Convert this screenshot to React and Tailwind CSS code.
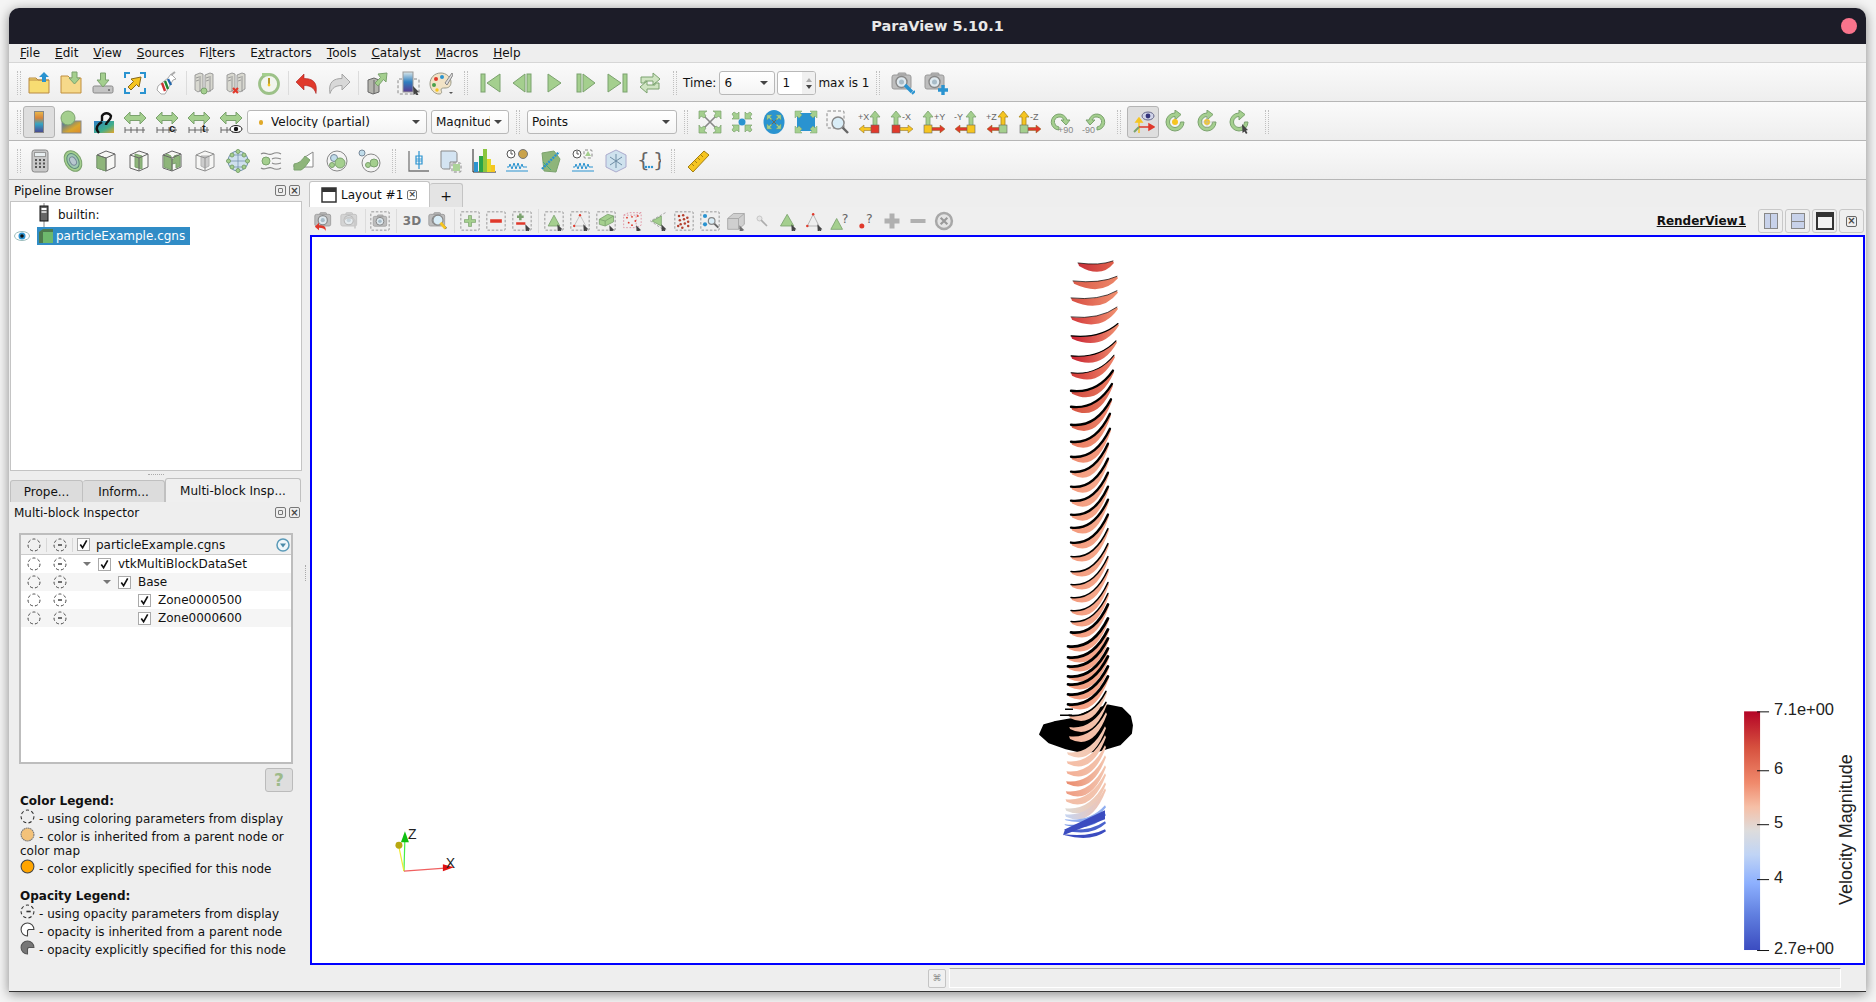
import React from "react";

// colours used by the paraview icon theme
const GF = "#a4cf8e";
const GS = "#7ba26e";
const YF = "#f6c520";
const BF = "#2a93d0";
const RF = "#e0392b";
const GR = "#bdbdbd";

const dash = (x, y, w, h) => <rect x={x} y={y} width={w} height={h} rx="1" fill="none" stroke="#888" strokeWidth="1" strokeDasharray="3 2" />;
const lens = (x, y, r = 5) => (
  <g>
    <line x1={x + r * 0.7} y1={y + r * 0.7} x2={x + r + 4} y2={y + r + 4} stroke="#666" strokeWidth="2.4" />
    <circle cx={x} cy={y} r={r} fill="#d9edf7" stroke="#888" strokeWidth="1.4" />
  </g>
);
const pointer = (x, y) => <path d={`M${x} ${y}l6 6-2 .5 1.5 2.5-1.5 1-1.5-2.5-2 1.5z`} fill="#444" />;
const camera = (
  <g>
    <rect x="7" y="2" width="8" height="4" rx="1" fill="#bbb" stroke="#999" />
    <rect x="1" y="4" width="19" height="14" rx="2" fill={GR} stroke="#999" />
    <circle cx="10.500" cy="11" r="5.500" fill="#dfe9ef" stroke="#888" strokeWidth="1.4" />
    <circle cx="10.500" cy="11" r="2.500" fill="#a8bcc8" />
  </g>
);
const server = (x, o = 1) => (
  <g opacity={o}>
    <path d={`M${x} 4l5-2 3 1v15l-5 3-3-2z`} fill="#d8d8d0" stroke="#8c8c8c" strokeWidth=".8" />
    <path d={`M${x + 5} 5v16M${x + 1} 7l3-1M${x + 1} 10l3-1`} stroke="#8c8c8c" strokeWidth=".8" fill="none" />
  </g>
);
const vArrow = (x, y, h, c) => (
  <path d={`M${x - 2} ${y + h + 6}h4v${-h}h3l-5-6-5 6h3z`} fill={c} stroke={c === GF ? GS : "#a8861a"} strokeWidth=".8" />
);
const axis = (label, hc, sq, left, vc, sx) => (
  <g>
    <path d={left ? "M1 19l5-4v2.500h11v3H6v2.500z" : "M23 19l-5-4v2.500H7v3h11v2.500z"} fill={hc} stroke="#8a6a20" strokeWidth=".5" />
    {vArrow(sx, 1, 10, vc)}
    <rect x={sx - 4} y="15" width="8" height="8" fill={sq} stroke="#666" strokeWidth=".6" />
    <text x={left ? 0 : 12} y="10" fontSize="9" fill="#666" fontFamily="Liberation Sans">{label}</text>
  </g>
);
const rescale = (tag) => (
  <g>
    <path d="M1 8l6-6v3.500h10V2l6 6-6 6v-3.500H7V14z" fill={GF} stroke={GS} />
    <path d="M2 20h20M2 17v6M8 17v6M14 17v6M20 17v6" stroke="#666" fill="none" />
    {tag}
  </g>
);
const rot = (inner, extra) => (
  <g>
    <path d="M12 3a9 9 0 1 0 9 9h-3.500a5.500 5.500 0 1 1-5.500-5.500V10l6-5.500L12 0z" fill={GF} stroke={GS} />
    {inner}
    {extra}
  </g>
);
const box3 = (face, op = 1) => (
  <g opacity={op}>
    <path d="M3 6l9-4 9 3v13l-9 4-9-3z" fill="#f7f7f5" stroke="#666" />
    {face}
    <path d="M3 6l9 3 9-4M12 9v13" fill="none" stroke="#666" />
  </g>
);
const blob = (cx, cy, r) => <circle cx={cx} cy={cy} r={r} fill={GF} stroke={GS} />;

const ICONS = {
  open: <g><path d="M2 7h7l2 2h11v13H2z" fill="#f7dc72" stroke="#b88a45" /><path d="M2 9h20" stroke="#b88a45" /><path d="M17 1l5 5h-3v5h-4V6h-3z" fill={BF} /></g>,
  loadState: <g><path d="M2 5h7l2 2h11v15H2z" fill="#f6d98a" stroke="#c08f3f" /><path d="M13 1h5v6h3l-5.500 6L10 7h3z" fill={GF} stroke={GS} /></g>,
  save: <g><rect x="2" y="15" width="20" height="7" rx="1.500" fill="#c4c4c4" stroke="#888" /><circle cx="18" cy="19" r="1" fill="#666" /><path d="M9.500 2h5v7H18l-6 7-6-7h3.500z" fill={GF} stroke={GS} /></g>,
  apply: <g><path d="M2 7V2h5M17 2h5v5M22 17v5h-5M7 22H2v-5" fill="none" stroke={BF} strokeWidth="2" /><path d="M18 6l-2 10-2.500-2.500L8 19l-3-3 5.500-5.500L8 8z" fill={YF} stroke="#8a6a1a" /></g>,
  flask: <g><path d="M16 3l5 5-3 1-8 14H6l-4-4 1-4 10-8z" fill="#fff" stroke="#aaa" /><path d="M7 12l3 8" stroke="#c33" strokeWidth="2.400" /><path d="M10 10l3 8" stroke="#283" strokeWidth="2.400" /><path d="M13 8l3 6" stroke="#26a" strokeWidth="2.400" /><path d="M20 1l-4 3" stroke="#aaa" strokeWidth="2" /></g>,
  connect: <g>{server(2)}{server(12)}<circle cx="11" cy="20" r="3" fill={GF} stroke={GS} /></g>,
  disconnect: <g>{server(2)}{server(12)}<path d="M8 17l5 5M13 17l-5 5" stroke={RF} strokeWidth="2.200" /></g>,
  timer: <g><circle cx="12" cy="13" r="9.500" fill="#f2f5ee" stroke="#9cc188" strokeWidth="2.800" /><path d="M12 7v6" stroke="#b79b2c" strokeWidth="2" /><circle cx="12" cy="14" r="1.400" fill={YF} /><path d="M5 2h8v3H5z" fill={GF} /></g>,
  undo: <g><path d="M1 11l8-8v4.500c8 0 14 3 12 15-2-6-6-8-12-8V19z" fill={RF} stroke="#a22" strokeWidth=".6" /></g>,
  redo: <g><path d="M23 11l-8-8v4.500C7 7.500 1 10.500 3 22.500c2-6 6-8 12-8V19z" fill="#d8d8d8" stroke="#a4a4a4" /></g>,
  boxArrow: <g><path d="M3 9l6-2 5 2v12l-6 2-5-2z" fill="#b4b4ae" stroke="#666" /><path d="M9 9v14" stroke="#666" /><path d="M22 2l-1 9-2.500-2.500L13 15l-3-3 5.500-5.500L13 3z" fill={GF} stroke={GS} /></g>,
  colorBox: <g>{dash(1, 8, 21, 15)}<defs><linearGradient id="cb1" x1="0" y1="0" x2="0" y2="1"><stop offset="0" stopColor="#dbe7e9" /><stop offset=".5" stopColor="#2f7fc0" /><stop offset="1" stopColor="#5a3a90" /></linearGradient></defs><rect x="6" y="1" width="10" height="20" fill="url(#cb1)" stroke="#999" />{pointer(16, 15)}</g>,
  palette: <g><path d="M12 2C5 2 1 7 1 13s5 10 9 10c3 0 3-2 2-4 0-2 2-2 4-2 4 0 6-2 6-6 0-5-5-9-10-9z" fill="#f1e3c6" stroke="#998" /><circle cx="7" cy="8" r="2" fill={RF} /><circle cx="13" cy="6" r="2" fill={BF} /><circle cx="5" cy="14" r="2" fill="#4aa04a" /><circle cx="8" cy="19" r="1.700" fill={YF} /><path d="M23 2l-7 10 2 2 6-10z" fill="#ddd" stroke="#888" /><path d="M20 21h4l-2 2z" fill="#555" /></g>,
  first: <g><rect x="3" y="3" width="4" height="18" fill={GF} stroke={GS} /><path d="M22 3v18L9 12z" fill={GF} stroke={GS} /></g>,
  back: <g><rect x="17" y="3" width="4" height="18" fill={GF} stroke={GS} /><path d="M15 3v18L3 12z" fill={GF} stroke={GS} /></g>,
  play: <path d="M6 3v18l13-9z" fill={GF} stroke={GS} />,
  next: <g><rect x="3" y="3" width="4" height="18" fill={GF} stroke={GS} /><path d="M9 3v18l12-9z" fill={GF} stroke={GS} /></g>,
  last: <g><rect x="17" y="3" width="4" height="18" fill={GF} stroke={GS} /><path d="M2 3v18l13-9z" fill={GF} stroke={GS} /></g>,
  loop: <g><path d="M3 12V6h12V2l7 6-7 6v-4H7v2z" fill="#cfe4c2" stroke={GS} /><path d="M21 12v6H9v4l-7-6 7-6v4h8v-2z" fill="#cfe4c2" stroke={GS} /></g>,
  camWrench: <g>{camera}<path d="M14 14l7 7" stroke={BF} strokeWidth="3.400" /><path d="M21 23l3-3" stroke={BF} strokeWidth="2" /></g>,
  camPlus: <g>{camera}<path d="M19 14v10M14 19h10" stroke={BF} strokeWidth="3.400" /></g>,
  bar: <g><rect x="7" y="1" width="10" height="22" fill="#888" /><defs><linearGradient id="cb2" x1="0" y1="0" x2="0" y2="1"><stop offset="0" stopColor="#e8b64a" /><stop offset=".3" stopColor="#d7843a" /><stop offset=".6" stopColor="#33a5c4" /><stop offset="1" stopColor="#4a4a92" /></linearGradient></defs><rect x="8" y="2" width="8" height="20" fill="url(#cb2)" /></g>,
  sphereGrad: <g><defs><linearGradient id="cb3" x1="0" y1="0" x2="1" y2="1"><stop offset="0" stopColor="#2f6fb8" /><stop offset=".6" stopColor="#d9a62f" /><stop offset="1" stopColor="#e08a2a" /></linearGradient></defs><rect x="3" y="11" width="19" height="12" fill="url(#cb3)" stroke="#888" /><circle cx="9" cy="8" r="7" fill={GF} stroke={GS} /></g>,
  linkGrad: <g><defs><linearGradient id="cb4" x1="0" y1="0" x2="1" y2="1"><stop offset="0" stopColor="#2f7fc8" /><stop offset=".6" stopColor="#3fae8c" /><stop offset="1" stopColor="#e5a52a" /></linearGradient></defs><rect x="3" y="11" width="20" height="12" fill="url(#cb4)" /><path d="M11 11V6a5 5 0 0 1 9 0c0 5-5 5-5 9M8 23c-3-3-3-6 0-9l3-2" fill="none" stroke="#111" strokeWidth="2.400" /></g>,
  rs: rescale(),
  rsC: rescale(<text x="14" y="22" fontSize="11" fontWeight="bold" fill="#222" fontFamily="Liberation Sans">c</text>),
  rsT: rescale(<text x="15" y="22" fontSize="11" fontWeight="bold" fill="#222" fontFamily="Liberation Sans">t</text>),
  rsE: rescale(<g><ellipse cx="17" cy="19" rx="6" ry="3.500" fill="#fff" stroke="#222" /><circle cx="17" cy="19" r="2.200" fill="#111" /></g>),
  cross: <g><path d="M5 5l14 14M19 5L5 19" stroke="#888" strokeWidth="1.600" /><path d="M1 1h8l-3 2 2 3-2 2-3-2-2 3zM23 1h-8l3 2-2 3 2 2 3-2 2 3zM1 23h8l-3-2 2-3-2-2-3 2-2-3zM23 23h-8l3-2-2-3 2-2 3 2 2-3z" fill={GF} stroke={GS} strokeWidth=".7" /></g>,
  converge: <g><circle cx="12" cy="12" r="3.500" fill={BF} /><path d="M9 9H2l2-2-2-3 2-2 3 2 2-2zM15 9h7l-2-2 2-3-2-2-3 2-2-2zM9 15H2l2 2-2 3 2 2 3-2 2 2zM15 15h7l-2 2 2 3-2 2-3-2-2 2z" fill={GF} stroke={GS} strokeWidth=".7" /></g>,
  circleFit: <g><ellipse cx="12" cy="12" rx="10.500" ry="12" fill={BF} /><path d="M7 7l10 10M17 7L7 17" stroke="#6a6a5a" /><path d="M5 5h5L8 7l2 2-1 1-2-2-2 2zM19 5h-5l2 2-2 2 1 1 2-2 2 2zM5 19h5l-2-2 2-2-1-1-2 2-2-2zM19 19h-5l2-2-2-2 1-1 2 2 2-2z" fill={GF} stroke={GS} strokeWidth=".5" /></g>,
  squareFit: <g><rect x="3" y="3" width="18" height="18" rx="2" fill={BF} /><path d="M1 1h7L6 3l2 2-3 3-2-2-2 2zM23 1h-7l2 2-2 2 3 3 2-2 2 2zM1 23h7l-2-2 2-2-3-3-2 2-2-2zM23 23h-7l2-2-2-2 3-3 2 2 2-2z" fill={GF} stroke={GS} strokeWidth=".5" /></g>,
  zoomBox: <g>{dash(1, 1, 17, 17)}{lens(12, 13, 6)}</g>,
  xp: axis("+X", YF, RF, true, GF, 17),
  xm: axis("-X", YF, RF, false, GF, 6),
  yp: axis("+Y", RF, YF, false, GF, 6),
  ym: axis("-Y", RF, YF, true, GF, 17),
  zp: axis("+Z", RF, GF, true, YF, 17),
  zm: axis("-Z", RF, GF, false, YF, 6),
  rotP: <g><path d="M9 20a8 8 0 1 1 8-10h3l-4 5-5-5h3a5 5 0 1 0-5 7z" fill={GF} stroke={GS} /><text x="8" y="23" fontSize="9" fill="#888" fontFamily="Liberation Sans">+90</text></g>,
  rotM: <g><path d="M15 20a8 8 0 1 0-8-10H4l4 5 5-5h-3a5 5 0 1 1 5 7z" fill={GF} stroke={GS} /><text x="0" y="23" fontSize="9" fill="#888" fontFamily="Liberation Sans">-90</text></g>,
  axesEye: <g><path d="M8 23V8M8 8l-3 4h6z" stroke={YF} fill={YF} strokeWidth="1.500" /><path d="M8 17h11M23 17l-5-3v6z" stroke={RF} fill={RF} strokeWidth="1.500" /><path d="M8 17l-5 5" stroke={GS} strokeWidth="2" /><ellipse cx="17" cy="6" rx="6" ry="4" fill="#cfd3e8" stroke="#668" /><circle cx="17" cy="6" r="2.400" fill="#33337a" /></g>,
  rotCenter: rot(<circle cx="12" cy="12" r="3" fill={YF} />),
  rotCross: rot(<g><circle cx="12" cy="12" r="3" fill={YF} /><path d="M12 5v14M5 12h14" stroke="#bbb" strokeWidth=".7" /></g>),
  rotPick: rot(null, pointer(15, 14)),
  calc: <g><rect x="4" y="1" width="16" height="22" rx="2.500" fill="#c8c8c8" stroke="#888" /><rect x="6.500" y="3.500" width="11" height="4" fill="#e8eef0" stroke="#999" /><path d="M7 11h2M11 11h2M15 11h2M7 14.500h2M11 14.500h2M15 14.500h2M7 18h2M11 18h2M15 18h2" stroke="#555" strokeWidth="2" /></g>,
  contour: <g><ellipse cx="12" cy="12" rx="8" ry="11" transform="rotate(-30 12 12)" fill={GF} stroke={GS} /><ellipse cx="12" cy="12" rx="5.500" ry="8" transform="rotate(-30 12 12)" fill="#9ec8b0" stroke="#5a8a78" /><ellipse cx="12" cy="12" rx="3" ry="4.500" transform="rotate(-30 12 12)" fill="#b8c8d0" stroke="#789" /></g>,
  clip: box3(<path d="M3 6l9 3v13l-9-3z" fill="#8eb57a" stroke={GS} />),
  slice: box3(<path d="M8 5l7 2v13l-7-2z" fill="#8eb57a" stroke={GS} />),
  extract: box3(<path d="M4 7l3-2 4 2v4l3-1V7l3-1 3 1v10l-4 2v-5l-4 1v6l-8-3z" fill="#8eb57a" stroke={GS} />),
  threshold: box3(<path d="M8 7l8 0v10l-4 2-4-2z" fill="#bbb" stroke="#999" />, .7),
  glyph: <g><circle cx="12" cy="12" r="10" fill="#cfe0ee" stroke="#6a8aa8" /><path d="M2 12h20M12 2v20M4 6h16M4 18h16" stroke="#6a8aa8" strokeWidth=".7" />{blob(12, 2.500, 2)}{blob(12, 21.500, 2)}{blob(2.500, 12, 2)}{blob(21.500, 12, 2)}{blob(6, 6, 2)}{blob(18, 6, 2)}{blob(6, 18, 2)}{blob(18, 18, 2)}</g>,
  stream: <g>{blob(7, 12, 4)}<path d="M2 5c4-3 7 2 11 0s6-2 9 0M13 10c3-2 6-1 9 0M13 14c3 2 6 1 9 0M2 19c4 3 7-2 11 0s6 2 9 0" fill="none" stroke="#888" strokeWidth="1.100" /></g>,
  warp: <g><path d="M2 16c6 0 8-3 11-8l8-5v15H2z" fill="#fff" stroke="#888" /><path d="M2 15c6-1 8-4 11-8l5 4c-3 4-5 8-9 10H2z" fill="#8eb57a" stroke={GS} /></g>,
  group: <g><circle cx="12" cy="12" r="10" fill="#f4f4f4" stroke="#888" /><circle cx="9" cy="9" r="3.500" fill="#c0dcea" stroke="#789" />{blob(15, 14, 5)}{blob(7, 16, 2.500)}</g>,
  level: <g><circle cx="13" cy="14" r="9" fill="#f4f4f4" stroke="#888" /><circle cx="4" cy="4" r="3" fill="#c0dcea" stroke="#789" />{blob(16, 14, 4)}{blob(10, 16, 2.500)}</g>,
  plotSel: <g><path d="M3 2v20h20" fill="none" stroke="#777" strokeWidth="1.300" /><path d="M13 2v18M10 7h6v8h-6z" fill="none" stroke={BF} strokeWidth="1.200" /><path d="M10 10h6M10 12h6" stroke={BF} strokeWidth=".8" /></g>,
  selCell: <g><path d="M2 2h13c3 0 3 3 3 3v8h-7v7H5s-3 0-3-3z" fill="#d4e4f2" stroke="#888" />{dash(13, 14, 9, 9)}<rect x="14" y="15" width="7" height="7" fill={GF} opacity=".9" /></g>,
  histo: <g><path d="M1 23h23" stroke="#222" /><path d="M1 0v23" stroke="#222" /><rect x="2" y="13" width="4" height="10" fill={BF} /><rect x="7" y="7" width="4" height="16" fill="#29a34a" /><rect x="11" y="0" width="4" height="23" fill="#8cc63f" /><rect x="15" y="10" width="4" height="13" fill="#e4d829" /><rect x="19" y="16" width="4" height="7" fill={YF} /></g>,
  timeProbe: <g><circle cx="6" cy="5" r="4" fill="#fff" stroke="#555" /><path d="M6 2v3h2" stroke="#555" fill="none" /><circle cx="18" cy="5" r="4.500" fill="#c9a24a" stroke="#777" /><path d="M2 18h2l1-3 2 5 2-6 2 6 2-6 2 6 2-5 1 3h4" stroke={BF} fill="none" /><path d="M1 22h22" stroke={BF} /></g>,
  clipGreen: <g><path d="M4 4l12-2 6 8-4 13-12-1z" fill="#8eb57a" stroke={GS} /><path d="M4 20L21 3" stroke={BF} strokeWidth="2.400" strokeDasharray="2 1" /><path d="M5 13l8 8" stroke="#4a7" /></g>,
  timeSel: <g><circle cx="6" cy="5" r="4" fill="#fff" stroke="#555" /><path d="M6 2v3h2" stroke="#555" fill="none" />{dash(13, 1, 8, 8)}<path d="M17 2l3 5h-6z" fill={GF} /><path d="M2 18h2l1-3 2 5 2-6 2 6 2-6 2 6 2-5 1 3h4" stroke={BF} fill="none" /><path d="M1 22h22" stroke={BF} /></g>,
  snow: <g><path d="M12 1l10 5v12l-10 5-10-5V6z" fill="#cfe2ee" stroke="#aac" /><path d="M12 5v14M6 8l12 8M18 8L6 16" stroke="#6d8ca4" /></g>,
  braces: <g><text x="0" y="18" fontSize="20" fill="#666" fontFamily="DejaVu Sans">{"{"}</text><text x="16" y="18" fontSize="20" fill="#666" fontFamily="DejaVu Sans">{"}"}</text><circle cx="9" cy="18" r="1.200" fill={BF} /><circle cx="12" cy="18" r="1.200" fill={BF} /><circle cx="15" cy="18" r="1.200" fill={BF} /></g>,
  ruler: <g><path d="M2 18L18 2l5 4L7 23z" fill={YF} stroke="#a37f12" /><path d="M6 15l2 2M9 12l2 2M12 9l2 2M15 6l2 2" stroke="#a37f12" /></g>,
  camUndo: <g>{camera}<path d="M1 19l5-5v3c5 0 9 1 8 7-1-3-4-4-8-4v3z" fill={RF} /></g>,
  camRedo: <g opacity=".55">{camera}<path d="M4 12a8 8 0 0 1 14 0v9" fill="none" stroke="#aaa" strokeWidth="2" /></g>,
  camBox: <g>{dash(1, 1, 22, 22)}<g transform="translate(3 3) scale(.85)">{camera}</g></g>,
  zoomPen: <g>{camera}{lens(12, 11, 6)}<path d="M15 14l6 7" stroke={YF} strokeWidth="3.400" /></g>,
  selPlus: <g>{dash(1, 1, 22, 22)}<path d="M12 5v14M5 12h14" stroke={GS} strokeWidth="4.400" /><path d="M12 6v12M6 12h12" stroke={GF} strokeWidth="2.800" /></g>,
  selMinus: <g>{dash(1, 1, 22, 22)}<path d="M5 12h14" stroke={RF} strokeWidth="4.400" /></g>,
  selPM: <g>{dash(1, 1, 22, 22)}<path d="M10 3v8M6 7h8" stroke={GS} strokeWidth="3" /><path d="M5 15h11" stroke={RF} strokeWidth="3" />{pointer(16, 16)}</g>,
  triBox: <g>{dash(1, 1, 22, 22)}<path d="M12 5l7 13H5z" fill={GF} stroke={GS} />{pointer(16, 16)}</g>,
  triPts: <g>{dash(1, 1, 22, 22)}<path d="M12 5l7 13H5z" fill="none" stroke="#bbb" /><circle cx="12" cy="5" r="1.400" fill={RF} /><circle cx="5" cy="18" r="1.400" fill={RF} />{pointer(16, 16)}</g>,
  boxGreen: <g>{dash(1, 1, 22, 22)}<path d="M4 10l10-6 7 2v7l-10 5-7-2z" fill={GF} stroke={GS} /><path d="M4 10l7 2 10-6M11 12v6" fill="none" stroke={GS} />{pointer(16, 17)}</g>,
  ptsCube: <g><g stroke="#d89" strokeDasharray="2 2" fill="none"><rect x="2" y="5" width="15" height="15" /><path d="M2 5l6-3h15v15l-6 3M17 5l6-3" /></g>{[[6, 8], [12, 7], [16, 12], [8, 14], [12, 17], [19, 6]].map((p, i) => <circle key={i} cx={p[0]} cy={p[1]} r="1.100" fill={RF} />)}{pointer(17, 17)}</g>,
  triDash: <g><path d="M21 2L3 12l15 10" fill="none" stroke="#999" strokeDasharray="3 2" /><path d="M5 12l11-6v12z" fill={GF} stroke={GS} />{pointer(16, 16)}</g>,
  ptsDense: <g>{dash(1, 1, 22, 22)}{[[6, 6], [11, 5], [16, 8], [7, 11], [12, 10], [17, 13], [8, 16], [13, 15], [10, 20], [17, 18], [5, 18]].map((p, i) => <circle key={i} cx={p[0]} cy={p[1]} r="1.500" fill="#b5402f" />)}</g>,
  selBlock: <g>{dash(1, 1, 22, 22)}<circle cx="6" cy="6" r="2.500" fill={BF} /><circle cx="6" cy="16" r="2.500" fill={BF} />{lens(14, 12, 4)}</g>,
  cubeGrey: <g opacity=".75"><path d="M2 9l7-6h13v13l-7 6H2z" fill="#c4c4c4" stroke="#8a8a8a" /><path d="M2 9h13v13M15 9l7-6" fill="none" stroke="#8a8a8a" />{pointer(16, 17)}</g>,
  pinSmall: <g opacity=".55"><circle cx="9" cy="9" r="3" fill="#ddd" stroke="#999" /><path d="M11 11l7 7" stroke="#777" strokeWidth="2" /></g>,
  triOnly: <g><path d="M11 4l8 14H3z" fill={GF} stroke={GS} />{pointer(16, 16)}</g>,
  triNodes: <g><path d="M11 4l7 14H4z" fill="none" stroke="#aaa" /><circle cx="11" cy="4" r="1.500" fill={RF} /><circle cx="4" cy="18" r="1.500" fill={RF} />{pointer(16, 16)}</g>,
  triQ: <g><path d="M8 9l7 13H1z" fill={GF} stroke={GS} /><text x="14" y="14" fontSize="15" fill="#666" fontFamily="DejaVu Sans">?</text></g>,
  ptQ: <g><circle cx="7" cy="18" r="3" fill={RF} /><text x="12" y="14" fontSize="15" fill="#666" fontFamily="DejaVu Sans">?</text></g>,
  plus: <path d="M12 3v18M3 12h18" stroke="#b0b0b0" strokeWidth="6" />,
  minus: <path d="M3 12h18" stroke="#b0b0b0" strokeWidth="5" />,
  xCircle: <g><circle cx="12" cy="12" r="9.500" fill="#e4e4e4" stroke="#a8a8a8" strokeWidth="3" /><path d="M8 8l8 8M16 8l-8 8" stroke="#999" strokeWidth="2.600" /></g>,
};

function Ico({ n, small }) {
  return (
    <svg viewBox="0 0 24 24" className={small ? "h-5 w-5" : "h-6 w-6"}>
      {ICONS[n]}
    </svg>
  );
}

function Btn({ n, active, wide }) {
  return (
    <div className={`flex h-[32px] shrink-0 items-center justify-center ${wide ? "w-[33px]" : "w-8"} ${active ? "rounded-[3px] border border-[#b4b4b4] bg-[#dedede]" : ""}`}>
      <Ico n={n} />
    </div>
  );
}

function RBtn({ n, text }) {
  return (
    <div className="flex h-[26px] w-[26px] shrink-0 items-center justify-center">
      {text ? <span className="text-[12px] font-semibold text-[#777]">{text}</span> : <Ico n={n} small />}
    </div>
  );
}

function Sep({ className = "w-[6px]" }) {
  return (
    <div className={`flex h-[24px] shrink-0 justify-center ${className}`}>
      <div className="w-px bg-[#dcdcdc]" />
    </div>
  );
}

function Grip({ className }) {
  return (
    <div className={`flex h-[24px] shrink-0 justify-center gap-[2px] ${className}`}>
      <div className="w-px border-l border-dotted border-[#c0c0c0]" />
      <div className="w-px border-l border-dotted border-[#c0c0c0]" />
    </div>
  );
}

function Combo({ className, children, dot }) {
  return (
    <div className={`flex h-[24px] shrink-0 items-center overflow-hidden rounded-[3px] border border-[#b8b8b8] bg-gradient-to-b from-white to-[#f4f4f4] pl-[4px] pr-[6px] ${className}`}>
      {dot && <span className="ml-[7px] mr-[8px] h-[5px] w-[4px] rounded-full bg-[#e0a92a]" />}
      <span className="min-w-0 flex-1 overflow-hidden whitespace-nowrap">{children}</span>
      <span className="ml-[4px] h-0 w-0 border-x-[4px] border-t-[4px] border-x-transparent border-t-[#444]" />
    </div>
  );
}

function Toolbar({ children }) {
  return (
    <div className="flex h-[39px] items-center border-b border-[#b6b6b6] bg-gradient-to-b from-[#fafafa] to-[#eeeeee] pl-[5px] pt-[2px]">
      {children}
    </div>
  );
}

const MENU = [
  ["", "F", "ile"],
  ["", "E", "dit"],
  ["", "V", "iew"],
  ["", "S", "ources"],
  ["Fi", "l", "ters"],
  ["E", "x", "tractors"],
  ["", "T", "ools"],
  ["", "C", "atalyst"],
  ["", "M", "acros"],
  ["", "H", "elp"],
];

function PanelTitle({ children }) {
  return (
    <div className="flex h-[21px] shrink-0 items-center justify-between pl-[4px] pr-[2px]">
      <span>{children}</span>
      <div className="flex gap-[3px]">
        <span className="flex h-[11px] w-[11px] items-center justify-center rounded-[2px] border border-[#777]">
          <span className="h-[5px] w-[5px] rounded-[1px] border border-[#777]" />
        </span>
        <span className="flex h-[11px] w-[11px] items-center justify-center rounded-[2px] border border-[#777] text-[10px] font-bold leading-none text-[#444]">×</span>
      </div>
    </div>
  );
}

function Dashed({ minus }) {
  return (
    <svg viewBox="0 0 14 14" className="h-[14px] w-[14px]">
      <circle cx="7" cy="7" r="6" fill="none" stroke="#444" strokeDasharray="3 2.200" />
      {minus && <path d="M5 7h4" stroke="#444" strokeWidth="1.500" />}
    </svg>
  );
}

function Check() {
  return (
    <span className="flex h-[13px] w-[13px] shrink-0 items-center justify-center border border-[#aaa] bg-white">
      <svg viewBox="0 0 12 12" className="h-[11px] w-[11px]">
        <path d="M2.500 6l2.500 3.500L9.500 1.500" fill="none" stroke="#111" strokeWidth="1.800" />
      </svg>
    </span>
  );
}

function TreeRow({ indent, arrow, label, alt }) {
  return (
    <div className={`flex h-[18px] items-center ${alt ? "bg-[#f5f5f5]" : "bg-white"}`}>
      <span className="flex w-[26px] justify-center"><Dashed /></span>
      <span className="flex w-[26px] justify-center"><Dashed minus /></span>
      <span style={{ width: indent }} className="flex shrink-0 items-center justify-end pr-[7px]">
        {arrow && <span className="h-0 w-0 border-x-[4px] border-t-[4px] border-x-transparent border-t-[#777]" />}
      </span>
      <Check />
      <span className="ml-[7px]">{label}</span>
    </div>
  );
}

function LegendLine({ icon, children }) {
  return (
    <div className="flex items-start">
      <span className="mr-[4px] mt-[-3px] shrink-0">{icon}</span>
      <span>{children}</span>
    </div>
  );
}

function Blade({ id, xL, yL, xR, yR, thick, c1, c2, bw }) {
  const w = xR - xL;
  const top = `M${xL} ${yL}Q${xL + w * 0.62} ${yL + 3} ${xR} ${yR}`;
  const bot = `L${xR + 1} ${yR + 2}Q${xL + w * 0.66} ${yL + 3 + thick * 2} ${xL + 1} ${yL + thick * 0.45}Z`;
  return (
    <g>
      <linearGradient id={id} gradientUnits="userSpaceOnUse" x1={xL} y1="0" x2={xR} y2="0">
        <stop offset="0" stopColor={c1} />
        <stop offset="1" stopColor={c2} />
      </linearGradient>
      <path d={top + bot} fill={`url(#${id})`} />
      {bw > 0 && <path d={top} fill="none" stroke="#000" strokeWidth={bw} strokeLinecap="round" />}
    </g>
  );
}

// left tip heights of the upper blades, read off the picture
const UPPER_Y = [263, 281, 298, 317, 336, 356, 373, 391, 407, 425, 442, 457, 472, 487, 501, 515, 528, 543, 557, 572, 585, 598, 611, 622, 633, 647, 658, 667, 677, 685, 695, 705];
const UPPER_C = [
  ["#c8303a", "#e0604c"], ["#dc5c4a", "#ec8668"], ["#d84e42", "#f09070"], ["#d4383a", "#f09070"],
  ["#c81e30", "#f09070"], ["#c8202f", "#ee8a6c"], ["#d23a38", "#ee8268"], ["#d24a40", "#e87a60"],
  ["#d6523f", "#e67860"], ["#dc6048", "#ee8870"], ["#ea7c60", "#f09478"], ["#ee8c70", "#f49c80"],
];
const UPPER_XR = [1113, 1117, 1117, 1117, 1118, 1116, 1114, 1113, 1112, 1111, 1110, 1110];
const LOWER = [
  [753, "#f3cdb9"], [762, "#f5bea6"], [772, "#f3ae94"], [782, "#ea8a6c"], [792, "#ee9a80"],
  [800, "#f2bda6"], [809, "#dcdad6"], [815, "#c5d5f2"], [820, "#90aef0"], [825, "#7090e4"], [830, "#4a62cc"], [835, "#3b4cc0"],
];

function upperBlade(i) {
  const y = UPPER_Y[i];
  const pair = UPPER_C[i] || ["#f39a7c", "#f6ab90"];
  const bw = i < 4 ? 0.7 : i < 7 ? 1.1 : i < 18 ? 2.4 : i < 24 ? 1.5 : 2.8;
  return {
    xL: i === 0 ? 1078 : i === 1 ? 1073 : i > 24 ? 1068 : 1071,
    yL: y,
    xR: UPPER_XR[i] || 1108,
    yR: y - Math.min(28, 2 + i * 2.6),
    thick: i < 18 ? 6.5 : 5.5,
    c1: pair[0],
    c2: pair[1],
    bw,
  };
}

function Scene() {
  return (
    <svg viewBox="312 237 1551 727" className="absolute inset-0 h-full w-full">
      <path d="M1040 735l4-9 10-3 17-3 16-7 21-7 14 3 8 8 2 9-1 8-11 11-20 6-17 2-17-4-17-6z" fill="#000" stroke="#000" strokeWidth="2" strokeLinejoin="round" />
      {UPPER_Y.map((_, i) => <Blade key={i} id={`u${i}`} {...upperBlade(i)} />)}
      <path d="M1060 716h12M1062 722h10M1065 710h8" stroke="#000" strokeWidth="1.500" />
      {[716, 727, 737].map((y, i) => (
        <Blade key={y} id={`m${i}`} xL={1069} yL={y} xR={1106} yR={y - 24} thick={6} c1="#f4b59c" c2="#f6c7b0" bw={i === 2 ? 0 : 1.600} />
      ))}
      {LOWER.map(([y, c], i) => (
        <Blade key={y} id={`l${i}`} xL={1067 - i * 0.3} yL={y} xR={1105} yR={i > 7 ? y - 14 + (i - 8) * 3 : y - 26} thick={i > 7 ? 2.5 : 5.5} c1={c} c2={i > 7 ? c : "#f3c4ae"} bw={0} />
      ))}
      <path d="M1063 836l2-6 40-19v9z" fill="#3b4cc0" />

      <path d="M403 872L404 838" stroke="#44ee44" strokeWidth="1.200" />
      <path d="M403 872L398 848" stroke="#f2ec30" strokeWidth="1.200" />
      <path d="M403 872L444 869" stroke="#f06060" strokeWidth="1.200" />
      <path d="M404 832l-4 11h8z" fill="#10c010" />
      <circle cx="398" cy="846" r="3.500" fill="#b8a810" />
      <path d="M453 868l-11-3v7z" fill="#e01010" />
      <text x="407" y="840" fontSize="14" fill="#222" fontFamily="Liberation Sans">Z</text>
      <text x="445" y="869" fontSize="14" fill="#222" fontFamily="Liberation Sans">X</text>

      <defs>
        <linearGradient id="cbar" x1="0" y1="0" x2="0" y2="1">
          <stop offset="0" stopColor="#b40426" />
          <stop offset=".15" stopColor="#d6503e" />
          <stop offset=".3" stopColor="#f08a6c" />
          <stop offset=".4" stopColor="#f6bfa6" />
          <stop offset=".5" stopColor="#dddcdc" />
          <stop offset=".6" stopColor="#c0d4f5" />
          <stop offset=".72" stopColor="#8db0fe" />
          <stop offset=".85" stopColor="#6180e0" />
          <stop offset="1" stopColor="#3b4cc0" />
        </linearGradient>
      </defs>
      <rect x="1745" y="712" width="16" height="239" fill="url(#cbar)" />
      <path d="M1758 712.500h12M1758 771.500h12M1758 825.500h12M1758 880.500h12M1758 951.500h12" stroke="#111" />
      <g fontSize="16.500" fill="#222" fontFamily="Liberation Sans">
        <text x="1775" y="716">7.1e+00</text>
        <text x="1775" y="775">6</text>
        <text x="1775" y="829">5</text>
        <text x="1775" y="884">4</text>
        <text x="1775" y="955">2.7e+00</text>
        <text transform="translate(1853 906) rotate(-90)" fontSize="18">Velocity Magnitude</text>
      </g>
    </svg>
  );
}

export default function App() {
  return (
    <div className="h-[1002px] w-[1876px] overflow-hidden bg-[#f4f4f4] pl-[9px] pt-[8px] text-[12px] leading-none text-[#111] [font-family:'DejaVu_Sans',sans-serif]">
      <div className="flex h-[984px] w-[1857px] flex-col overflow-hidden rounded-t-[10px] border-b border-[#333] bg-[#eeeeee] shadow-[0_2px_12px_rgba(0,0,0,0.45)]">
        <div className="relative flex h-[36px] shrink-0 items-center justify-center bg-[#1c1c28] text-[14.500px] font-bold text-[#e8e8e8]">
          ParaView 5.10.1
          <span className="absolute right-[9px] h-[16px] w-[16px] rounded-full bg-[#f9748c]" />
        </div>

        <div className="flex h-[19px] shrink-0 items-center gap-[15px] border-b border-[#d6d6d6] pl-[11px]">
          {MENU.map(([a, u, b]) => (
            <span key={b}>{a}<u>{u}</u>{b}</span>
          ))}
        </div>

        <Toolbar>
          <Grip className="w-[9px]" />
          {["open", "loadState", "save", "apply", "flask"].map((n) => <Btn key={n} n={n} />)}
          <Sep />
          {["connect", "disconnect", "timer"].map((n) => <Btn key={n} n={n} />)}
          <Sep />
          {["undo", "redo"].map((n) => <Btn key={n} n={n} />)}
          <Sep />
          {["boxArrow", "colorBox", "palette"].map((n) => <Btn key={n} n={n} />)}
          <Grip className="w-[17px]" />
          {["first", "back", "play", "next", "last", "loop"].map((n) => <Btn key={n} n={n} />)}
          <Grip className="w-[17px]" />
          <span className="mr-[3px]">Time:</span>
          <Combo className="w-[56px]">6</Combo>
          <div className="ml-[2px] flex h-[24px] w-[39px] items-center overflow-hidden rounded-[3px] border border-[#b8b8b8] bg-white pl-[4px]">
            <span className="flex-1">1</span>
            <span className="flex h-full w-[13px] flex-col items-center justify-center gap-[3px] bg-[#f0f0f0]">
              <span className="h-0 w-0 border-x-[3px] border-b-[4px] border-x-transparent border-b-[#aaa]" />
              <span className="h-0 w-0 border-x-[3px] border-t-[4px] border-x-transparent border-t-[#444]" />
            </span>
          </div>
          <span className="ml-[2px]">max is 1</span>
          <Grip className="w-[18px]" />
          <Btn n="camWrench" />
          <div className="w-[1px]" />
          <Btn n="camPlus" />
        </Toolbar>

        <Toolbar>
          <Grip className="w-[9px]" />
          <Btn n="bar" active />
          {["sphereGrad", "linkGrad", "rs", "rsC", "rsT", "rsE"].map((n) => <Btn key={n} n={n} />)}
          <Combo className="w-[180px]" dot>Velocity (partial)</Combo>
          <Combo className="ml-[4px] w-[78px]">Magnitude</Combo>
          <Grip className="w-[18px]" />
          <Combo className="w-[150px]">Points</Combo>
          <Grip className="w-[17px]" />
          {["cross", "converge", "circleFit", "squareFit", "zoomBox", "xp", "xm", "yp", "ym", "zp", "zm", "rotP", "rotM"].map((n) => <Btn key={n} n={n} />)}
          <Grip className="w-[17px]" />
          <Btn n="axesEye" active />
          {["rotCenter", "rotCross", "rotPick"].map((n) => <Btn key={n} n={n} />)}
          <Grip className="w-[24px]" />
        </Toolbar>

        <Toolbar>
          <Grip className="w-[9px]" />
          {["calc", "contour", "clip", "slice", "extract", "threshold", "glyph", "stream", "warp", "group", "level"].map((n) => <Btn key={n} n={n} wide />)}
          <Grip className="w-[15px]" />
          {["plotSel", "selCell", "histo", "timeProbe", "clipGreen", "timeSel", "snow", "braces"].map((n) => <Btn key={n} n={n} wide />)}
          <Grip className="w-[16px]" />
          <Btn n="ruler" wide />
        </Toolbar>

        <div className="flex min-h-0 flex-1">
          <div className="flex w-[293px] shrink-0 flex-col pl-px">
            <PanelTitle>Pipeline Browser</PanelTitle>
            <div className="h-[270px] shrink-0 border border-[#c4c4c4] bg-white">
              <div className="relative ml-[28px] mt-[1px] flex h-[24px] items-center">
                <svg viewBox="0 0 10 24" className="mr-[4px] h-[24px] w-[10px]">
                  <path d="M5 0v24" stroke="#888" />
                  <rect x="1" y="3" width="8" height="15" fill="#666" stroke="#111" />
                  <rect x="2.500" y="5" width="5" height="2" fill="#fff" />
                  <rect x="2.500" y="8" width="5" height="2" fill="#ccc" />
                </svg>
                <span className="ml-[5px]">builtin:</span>
              </div>
              <div className="flex items-center">
                <svg viewBox="0 0 16 10" className="ml-[3px] mr-[7px] h-[10px] w-[16px]">
                  <ellipse cx="8" cy="5" rx="7.500" ry="4.500" fill="#fff" stroke="#9bb" />
                  <circle cx="8" cy="5" r="3.500" fill={BF} />
                  <circle cx="8" cy="5" r="1.800" fill="#111" />
                </svg>
                <div className="flex h-[18px] w-[153px] items-center bg-[#308cc6] text-white">
                  <svg viewBox="0 0 16 16" className="ml-[1px] mr-[2px] h-[16px] w-[16px]">
                    <path d="M1 4l4-3h10v11l-4 3H1z" fill="#4d7a4d" />
                    <rect x="5" y="4" width="10" height="11" fill="#6db86d" />
                  </svg>
                  particleExample.cgns
                </div>
              </div>
            </div>

            <div className="flex h-[7px] shrink-0 items-center justify-center">
              <div className="h-px w-[16px] border-t border-dotted border-[#aaa]" />
            </div>

            <div className="flex h-[24px] shrink-0 items-end">
              <div className="flex h-[22px] w-[73px] items-center justify-center rounded-t-[3px] border border-b-0 border-[#c0c0c0] bg-[#dcdcdc]">Prope...</div>
              <div className="flex h-[22px] w-[82px] items-center justify-center rounded-t-[3px] border border-b-0 border-l-0 border-[#c0c0c0] bg-[#dcdcdc]">Inform...</div>
              <div className="flex h-[24px] w-[136px] items-center justify-center rounded-t-[3px] border border-b-0 border-[#c0c0c0] bg-[#efefef]">Multi-block Insp...</div>
            </div>

            <PanelTitle>Multi-block Inspector</PanelTitle>

            <div className="ml-[9px] mt-[10px] h-[231px] w-[274px] shrink-0 border-2 border-[#bdbdbd] bg-white">
              <div className="flex h-[20px] items-center border-b border-[#ccc] bg-[#f0f0f0]">
                <span className="flex w-[26px] justify-center border-r border-[#d8d8d8]"><Dashed /></span>
                <span className="flex w-[26px] justify-center border-r border-[#d8d8d8]"><Dashed minus /></span>
                <span className="ml-[4px]"><Check /></span>
                <span className="ml-[6px] flex-1">particleExample.cgns</span>
                <svg viewBox="0 0 14 14" className="mr-[1px] h-[14px] w-[14px]">
                  <circle cx="7" cy="7" r="6" fill="#eef6fa" stroke="#5a9ab8" strokeWidth="1.500" />
                  <path d="M4 5.500h6l-3 4z" fill="#4a8aa8" />
                </svg>
              </div>
              <TreeRow indent={25} arrow label="vtkMultiBlockDataSet" />
              <TreeRow indent={45} arrow label="Base" alt />
              <TreeRow indent={65} label="Zone0000500" />
              <TreeRow indent={65} label="Zone0000600" alt />
            </div>

            <div className="ml-[255px] mt-[4px] flex h-[24px] w-[28px] shrink-0 items-center justify-center rounded-[3px] border border-[#bbb] bg-[#dedede] text-[17px] font-bold text-[#9dba8a]">?</div>

            <div className="ml-[10px] mt-[2px] flex flex-col leading-[14px]">
              <div className="mb-[4px] font-bold">Color Legend:</div>
              <LegendLine icon={<svg viewBox="0 0 14 14" className="h-[15px] w-[15px]"><circle cx="7" cy="7" r="6" fill="none" stroke="#333" strokeDasharray="3 2.200" /></svg>}>- using coloring parameters from display</LegendLine>
              <div className="h-[4px]" />
              <LegendLine icon={<svg viewBox="0 0 14 14" className="h-[15px] w-[15px]"><circle cx="7" cy="7" r="6" fill="#f3c27a" stroke="#777" strokeDasharray="1.500 .5" /></svg>}>- color is inherited from a parent node or</LegendLine>
              <div>color map</div>
              <div className="h-[4px]" />
              <LegendLine icon={<svg viewBox="0 0 14 14" className="h-[15px] w-[15px]"><circle cx="7" cy="7" r="6" fill="#ffa500" stroke="#444" /></svg>}>- color explicitly specified for this node</LegendLine>
              <div className="h-[13px]" />
              <div className="mb-[4px] font-bold">Opacity Legend:</div>
              <LegendLine icon={<svg viewBox="0 0 14 14" className="h-[15px] w-[15px]"><circle cx="7" cy="7" r="6" fill="none" stroke="#333" strokeDasharray="3 2.200" /><path d="M6 7h4" stroke="#333" strokeWidth="1.500" /></svg>}>- using opacity parameters from display</LegendLine>
              <div className="h-[4px]" />
              <LegendLine icon={<svg viewBox="0 0 14 14" className="h-[15px] w-[15px]"><path d="M7 8V13A6 6 0 1 1 13 7H8z" fill="#fff" stroke="#444" /></svg>}>- opacity is inherited from a parent node</LegendLine>
              <div className="h-[4px]" />
              <LegendLine icon={<svg viewBox="0 0 14 14" className="h-[15px] w-[15px]"><path d="M7 8V13A6 6 0 1 1 13 7H8z" fill="#777" stroke="#555" /></svg>}>- opacity explicitly specified for this node</LegendLine>
            </div>
          </div>

          <div className="flex w-[7px] shrink-0 items-center justify-center">
            <div className="h-[16px] w-px border-l border-dotted border-[#aaa]" />
          </div>

          <div className="flex min-w-0 flex-1 flex-col">
            <div className="flex h-[27px] shrink-0 items-end">
              <div className="flex h-[26px] w-[121px] items-center rounded-t-[3px] border border-b-0 border-[#c4c4c4] bg-white pl-[11px]">
                <svg viewBox="0 0 16 16" className="mr-[4px] h-[16px] w-[16px]">
                  <rect x="1" y="1" width="14" height="14" fill="#fff" stroke="#333" strokeWidth="1.500" />
                  <rect x="1" y="1" width="14" height="4" fill="#333" />
                </svg>
                Layout #1
                <span className="ml-[4px] flex h-[10px] w-[10px] items-center justify-center rounded-[2px] border border-[#777] text-[9px] font-bold text-[#444]">×</span>
              </div>
              <div className="flex h-[24px] w-[33px] items-center justify-center rounded-t-[3px] border border-b-0 border-l-0 border-[#c4c4c4] bg-[#e4e4e4] text-[14px]">+</div>
            </div>

            <div className="flex h-[28px] shrink-0 items-center bg-[#efefef] pl-[2px] pr-[2px]">
              <RBtn n="camUndo" />
              <RBtn n="camRedo" />
              <Sep className="w-[4px]" />
              <RBtn n="camBox" />
              <Sep />
              <RBtn text="3D" />
              <RBtn n="zoomPen" />
              <Sep />
              <RBtn n="selPlus" />
              <RBtn n="selMinus" />
              <RBtn n="selPM" />
              <Sep />
              {["triBox", "triPts", "boxGreen", "ptsCube", "triDash", "ptsDense", "selBlock", "cubeGrey", "pinSmall", "triOnly", "triNodes", "triQ", "ptQ", "plus", "minus", "xCircle"].map((n) => <RBtn key={n} n={n} />)}
              <span className="ml-auto mr-[12px] font-bold underline">RenderView1</span>
              <div className="flex gap-[2px]">
                <div className="flex h-[24px] w-[25px] items-center justify-center rounded-[3px] border border-[#c8c8c8]">
                  <span className="flex h-[16px] w-[14px] border border-[#888] bg-[#c8d2ea]"><span className="ml-[5px] w-px bg-[#888]" /></span>
                </div>
                <div className="flex h-[24px] w-[25px] items-center justify-center rounded-[3px] border border-[#c8c8c8]">
                  <span className="flex h-[16px] w-[14px] items-center border border-[#888] bg-[#c8d2ea]"><span className="h-px w-full bg-[#888]" /></span>
                </div>
                <div className="flex h-[24px] w-[25px] items-center justify-center rounded-[3px] border border-[#c8c8c8]">
                  <span className="h-[18px] w-[18px] border-2 border-t-[5px] border-[#333] bg-[#f2f2f2]" />
                </div>
                <div className="flex h-[24px] w-[25px] items-center justify-center rounded-[3px] border border-[#c8c8c8]">
                  <span className="flex h-[11px] w-[11px] items-center justify-center rounded-[2px] border border-[#666] text-[10px] font-bold text-[#444]">×</span>
                </div>
              </div>
            </div>

            <div className="relative ml-px mr-px min-h-0 flex-1 border-2 border-[#0000ff] bg-white">
              <Scene />
            </div>
          </div>
        </div>

        <div className="flex h-[26px] shrink-0 items-center justify-end pr-[25px]">
          <div className="mr-[3px] flex h-[19px] w-[18px] items-center justify-center rounded-[2px] border border-[#c4c4c4] bg-[#f0f0f0] text-[9px] text-[#888]">⌘</div>
          <div className="h-[20px] w-[892px] border-t border-[#aaa] border-x border-x-white border-b border-b-white" />
        </div>
      </div>
    </div>
  );
}
